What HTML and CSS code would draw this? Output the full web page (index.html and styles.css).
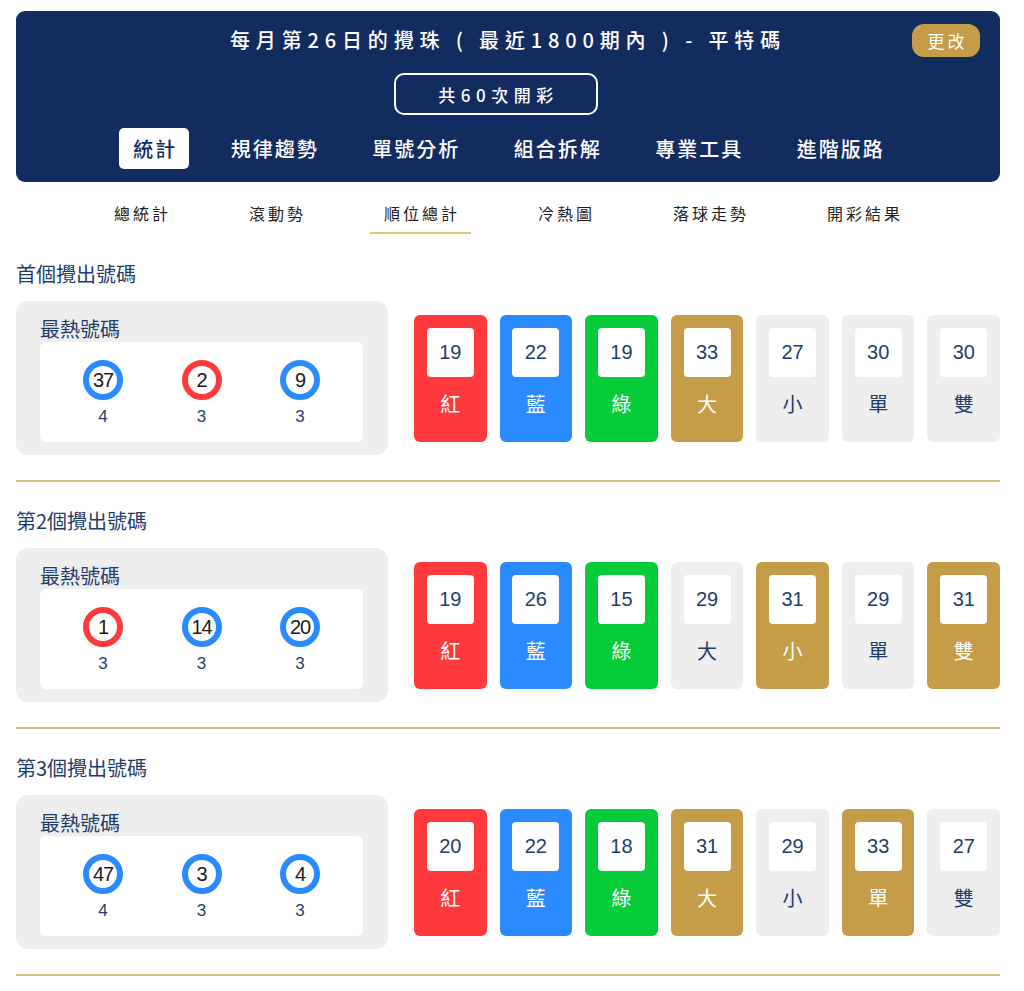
FILE: index.html
```html
<!DOCTYPE html>
<html lang="zh-Hant">
<head>
<meta charset="utf-8">
<title>順位總計</title>
<link rel="stylesheet" href="styles.css">
</head>
<body>
<div class="page">
  <header class="hero">
    <h1 class="hero-title">每月第26日的攪珠 ( 最近1800期內 ) - 平特碼</h1>
    <button class="change-btn">更改</button>
    <div class="count-box">共60次開彩</div>
    <nav class="main-tabs">
      <span class="main-tab active">統計</span>
      <span class="main-tab">規律趨勢</span>
      <span class="main-tab">單號分析</span>
      <span class="main-tab">組合拆解</span>
      <span class="main-tab">專業工具</span>
      <span class="main-tab">進階版路</span>
    </nav>
  </header>

  <nav class="sub-tabs">
    <span class="sub-tab">總統計</span>
    <span class="sub-tab">滾動勢</span>
    <span class="sub-tab active">順位總計</span>
    <span class="sub-tab">冷熱圖</span>
    <span class="sub-tab">落球走勢</span>
    <span class="sub-tab">開彩結果</span>
  </nav>

  <section class="block">
    <h2 class="block-title">首個攪出號碼</h2>
    <div class="block-row">
      <div class="hot-card">
        <div class="hot-title">最熱號碼</div>
        <div class="hot-list">
          <div class="hot-item"><span class="ball blue">37</span><span class="hot-count">4</span></div>
          <div class="hot-item"><span class="ball red">2</span><span class="hot-count">3</span></div>
          <div class="hot-item"><span class="ball blue">9</span><span class="hot-count">3</span></div>
        </div>
      </div>
      <div class="tiles">
        <div class="tile red"><span class="tile-num">19</span><span class="tile-label">紅</span></div>
        <div class="tile blue"><span class="tile-num">22</span><span class="tile-label">藍</span></div>
        <div class="tile green"><span class="tile-num">19</span><span class="tile-label">綠</span></div>
        <div class="tile gold"><span class="tile-num">33</span><span class="tile-label">大</span></div>
        <div class="tile grey"><span class="tile-num">27</span><span class="tile-label">小</span></div>
        <div class="tile grey"><span class="tile-num">30</span><span class="tile-label">單</span></div>
        <div class="tile grey"><span class="tile-num">30</span><span class="tile-label">雙</span></div>
      </div>
    </div>
  </section>

  <section class="block">
    <h2 class="block-title">第2個攪出號碼</h2>
    <div class="block-row">
      <div class="hot-card">
        <div class="hot-title">最熱號碼</div>
        <div class="hot-list">
          <div class="hot-item"><span class="ball red">1</span><span class="hot-count">3</span></div>
          <div class="hot-item"><span class="ball blue">14</span><span class="hot-count">3</span></div>
          <div class="hot-item"><span class="ball blue">20</span><span class="hot-count">3</span></div>
        </div>
      </div>
      <div class="tiles">
        <div class="tile red"><span class="tile-num">19</span><span class="tile-label">紅</span></div>
        <div class="tile blue"><span class="tile-num">26</span><span class="tile-label">藍</span></div>
        <div class="tile green"><span class="tile-num">15</span><span class="tile-label">綠</span></div>
        <div class="tile grey"><span class="tile-num">29</span><span class="tile-label">大</span></div>
        <div class="tile gold"><span class="tile-num">31</span><span class="tile-label">小</span></div>
        <div class="tile grey"><span class="tile-num">29</span><span class="tile-label">單</span></div>
        <div class="tile gold"><span class="tile-num">31</span><span class="tile-label">雙</span></div>
      </div>
    </div>
  </section>

  <section class="block">
    <h2 class="block-title">第3個攪出號碼</h2>
    <div class="block-row">
      <div class="hot-card">
        <div class="hot-title">最熱號碼</div>
        <div class="hot-list">
          <div class="hot-item"><span class="ball blue">47</span><span class="hot-count">4</span></div>
          <div class="hot-item"><span class="ball blue">3</span><span class="hot-count">3</span></div>
          <div class="hot-item"><span class="ball blue">4</span><span class="hot-count">3</span></div>
        </div>
      </div>
      <div class="tiles">
        <div class="tile red"><span class="tile-num">20</span><span class="tile-label">紅</span></div>
        <div class="tile blue"><span class="tile-num">22</span><span class="tile-label">藍</span></div>
        <div class="tile green"><span class="tile-num">18</span><span class="tile-label">綠</span></div>
        <div class="tile gold"><span class="tile-num">31</span><span class="tile-label">大</span></div>
        <div class="tile grey"><span class="tile-num">29</span><span class="tile-label">小</span></div>
        <div class="tile gold"><span class="tile-num">33</span><span class="tile-label">單</span></div>
        <div class="tile grey"><span class="tile-num">27</span><span class="tile-label">雙</span></div>
      </div>
    </div>
  </section>
</div>
</body>
</html>
```

FILE: styles.css
```css
* { box-sizing: border-box; }

html, body {
  margin: 0;
  padding: 0;
  background: #ffffff;
  overflow: hidden;
}

body {
  font-family: "Noto Sans CJK TC", "Noto Sans", sans-serif;
  color: #1f3d6b;
}

.page {
  width: 984px;
  margin-left: 16px;
  padding-top: 11px;
}

/* ---------- header ---------- */
.hero {
  position: relative;
  background: #132c5f;
  border-radius: 9px;
  padding: 14px 0 13px;
  display: flex;
  flex-direction: column;
  align-items: center;
}

.hero-title {
  margin: 0;
  font-size: 20px;
  line-height: 30px;
  font-weight: 500;
  letter-spacing: 5.85px;
  color: #ffffff;
  text-align: center;
}

.change-btn {
  position: absolute;
  top: 13px;
  right: 20px;
  width: 68px;
  height: 33px;
  border: none;
  border-radius: 12px;
  background: #c59c48;
  color: #ffffff;
  font-family: "Noto Sans CJK TC", sans-serif;
  font-size: 17px;
  letter-spacing: 3px;
  padding: 0 0 0 3px;
}

.count-box {
  margin-top: 18px;
  margin-right: 24px;
  width: 204px;
  height: 42px;
  border: 2px solid #ffffff;
  border-radius: 10px;
  color: #ffffff;
  font-size: 17px;
  font-weight: 500;
  letter-spacing: 5.5px;
  display: flex;
  align-items: center;
  justify-content: center;
  padding-left: 5px;
}

.main-tabs {
  margin-top: 13px;
  display: flex;
  gap: 27.5px;
  justify-content: center;
}

.main-tab {
  height: 41px;
  padding: 0 12px 0 14px;
  border-radius: 5px;
  color: #ffffff;
  font-size: 20px;
  font-weight: 500;
  letter-spacing: 2px;
  display: flex;
  align-items: center;
}

.main-tab.active {
  background: #ffffff;
  color: #132c5f;
}

/* ---------- sub tabs ---------- */
.sub-tabs {
  display: flex;
  justify-content: center;
  gap: 53px;
  margin-top: 18px;
  padding-right: 2px;
}

.sub-tab {
  font-size: 16px;
  line-height: 26px;
  letter-spacing: 3px;
  color: #222222;
  padding: 0 11px 6px 14px;
  border-bottom: 2px solid transparent;
}

.sub-tab.active {
  border-bottom-color: #e3c27c;
}

/* ---------- blocks ---------- */
.block {
  border-bottom: 2px solid #d9bb80;
  padding: 28px 0 25px;
}

.block + .block {
  padding-top: 27px;
}

.block-title {
  margin: 0 0 15px;
  font-size: 20px;
  line-height: 24px;
  font-weight: 400;
  color: #1f3d6b;
}

.block-row {
  display: flex;
  align-items: center;
  gap: 26px;
}

.hot-card {
  width: 372px;
  flex: none;
  background: #eeeeee;
  border-radius: 12px;
  padding: 14px 25px 13px 24px;
}

.hot-title {
  font-size: 20px;
  line-height: 27px;
  color: #1f3d6b;
}

.hot-list {
  background: #ffffff;
  border-radius: 6px;
  height: 100px;
  display: flex;
  justify-content: space-evenly;
  align-items: flex-start;
  padding: 18px 0 0;
}

.hot-item {
  width: 71px;
  display: flex;
  flex-direction: column;
  align-items: center;
}

.ball {
  width: 40px;
  height: 40px;
  border-radius: 50%;
  border: 6px solid #2a8bff;
  background: #ffffff;
  color: #1a1a1a;
  font-family: "Liberation Sans", Arial, sans-serif;
  font-size: 20px;
  letter-spacing: -1px;
  display: flex;
  align-items: center;
  justify-content: center;
}

.ball.red { border-color: #ff3a3d; }
.ball.blue { border-color: #2a8bff; }

.hot-count {
  margin-top: 7px;
  font-family: "Liberation Sans", Arial, sans-serif;
  font-size: 17px;
  line-height: 20px;
  color: #1f3d6b;
}

/* ---------- tiles ---------- */
.tiles {
  flex: 1;
  display: flex;
  gap: 13px;
}

.tile {
  flex: 1;
  height: 127px;
  border-radius: 6px;
  padding-top: 13px;
  display: flex;
  flex-direction: column;
  align-items: center;
}

.tile-num {
  width: 47px;
  height: 49px;
  background: #ffffff;
  border-radius: 4px;
  display: flex;
  align-items: center;
  justify-content: center;
  font-family: "Liberation Sans", Arial, sans-serif;
  font-size: 20px;
  color: #1f3d6b;
}

.tile-label {
  margin-top: 13px;
  font-size: 20px;
  line-height: 28px;
  color: #ffffff;
}

.tile.red { background: #ff3a3d; }
.tile.blue { background: #2a8bff; }
.tile.green { background: #05cc38; }
.tile.gold { background: #c59c48; }
.tile.grey { background: #eeeeee; }
.tile.grey .tile-label { color: #1f3d6b; }
```
